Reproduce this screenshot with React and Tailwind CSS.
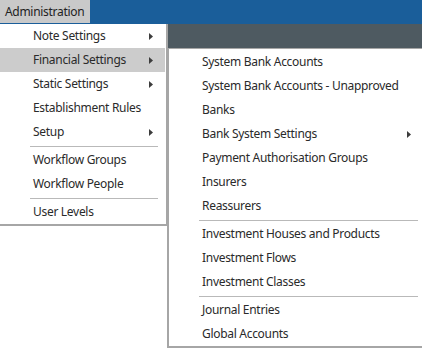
import React from 'react';

const mainItems = [
  { label: 'Note Settings', sub: true },
  { label: 'Financial Settings', sub: true, active: true },
  { label: 'Static Settings', sub: true },
  { label: 'Establishment Rules' },
  { label: 'Setup', sub: true },
  { sep: true },
  { label: 'Workflow Groups' },
  { label: 'Workflow People' },
  { sep: true },
  { label: 'User Levels' },
];

const financialItems = [
  { label: 'System Bank Accounts' },
  { label: 'System Bank Accounts - Unapproved' },
  { label: 'Banks' },
  { label: 'Bank System Settings', sub: true },
  { label: 'Payment Authorisation Groups' },
  { label: 'Insurers' },
  { label: 'Reassurers' },
  { sep: true },
  { label: 'Investment Houses and Products' },
  { label: 'Investment Flows' },
  { label: 'Investment Classes' },
  { sep: true },
  { label: 'Journal Entries' },
  { label: 'Global Accounts' },
];

const Arrow = () => (
  <svg width="4" height="7" viewBox="0 0 4 7" className="shrink-0">
    <path d="M0 0 L4 3.5 L0 7 Z" fill="#3c3c3c" />
  </svg>
);

const MenuList = ({ items, textLeft, arrowRight, sepLeft, sepRight }) => (
  <div className="flex flex-col">
    {items.map((item, i) =>
      item.sep ? (
        <div key={i} className={`h-[4px] flex items-center ${sepLeft} ${sepRight}`}>
          <div className="h-px w-full bg-[#b9b9b9]" />
        </div>
      ) : (
        <div
          key={i}
          className={`h-[24px] flex items-center justify-between ${textLeft} ${arrowRight} ${item.active ? 'bg-[#cccccc]' : ''}`}
        >
          <span>{item.label}</span>
          {item.sub && <Arrow />}
        </div>
      )
    )}
  </div>
);

export default function App() {
  return (
    <div className="relative w-[422px] h-[348px] bg-white overflow-hidden text-[12px] tracking-[-0.3px] text-[#2a2a2a] font-['Segoe_UI','Noto_Sans',sans-serif]">
      <div className="h-[24px] bg-[#1a5e9a] flex">
        <div className="w-[90px] h-[23px] bg-[#c9c9c9] flex items-center pl-[5px] text-[#222]">
          Administration
        </div>
      </div>
      <div className="h-[24px] bg-[#4e5a61]" />
      <div className="h-px bg-[#c4c4c4]" />

      {/* main dropdown */}
      <div className="absolute left-0 top-[24px] w-[168px] bg-white border-r-2 border-b-2 border-[#a6a6a6] pr-[1px]">
        <MenuList items={mainItems} textLeft="pl-[33px]" arrowRight="pr-[12px]" sepLeft="pl-[30px]" sepRight="pr-[7px]" />
      </div>

      {/* financial submenu */}
      <div className="absolute left-[167px] top-[48px] w-[256px] bg-white border-l-2 border-t border-b-2 border-[#a6a6a6] pt-[1px]">
        <MenuList items={financialItems} textLeft="pl-[33px]" arrowRight="pr-[12px]" sepLeft="pl-[30px]" sepRight="pr-[5px]" />
      </div>
    </div>
  );
}
